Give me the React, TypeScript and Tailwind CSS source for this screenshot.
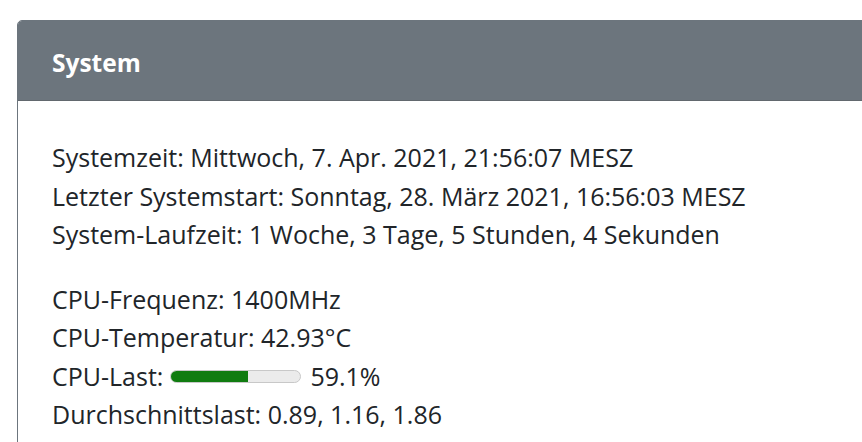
export default function App() {
  const font = { fontFamily: '"Open Sans", "Noto Sans", sans-serif' };
  return (
    <div
      className="h-[442px] w-[862px] overflow-hidden bg-white pl-[17px] pt-[20px]"
      style={font}
    >
      <div className="w-[880px] overflow-hidden rounded-[5px] border border-[#6c757d]">
        <div className="flex h-[80px] items-center border-b border-[#62686e] bg-[#6c757d] px-[34px] pt-[5px]">
          <h2 className="text-[24.5px] font-bold text-white">System</h2>
        </div>

        <div className="px-[34px] pt-[37px] pb-8 text-[25px] leading-[38.5px] text-[#212529]">
          <div>
            <p>Systemzeit: Mittwoch, 7. Apr. 2021, 21:56:07 MESZ</p>
            <p>Letzter Systemstart: Sonntag, 28. März 2021, 16:56:03 MESZ</p>
            <p>System-Laufzeit: 1 Woche, 3 Tage, 5 Stunden, 4 Sekunden</p>
          </div>

          <div className="mt-[26px]">
            <p>CPU-Frequenz: 1400MHz</p>
            <p>CPU-Temperatur: 42.93°C</p>
            <p className="flex items-center">
              CPU-Last:
              <span className="ml-[7px] mr-[9px] mt-[2px] inline-block h-[13px] w-[131px] overflow-hidden rounded-full border border-[#c8c8c8] bg-[#ebebeb]">
                <span className="block h-full w-[59.1%] bg-[#107c10]" />
              </span>
              59.1%
            </p>
            <p>Durchschnittslast: 0.89, 1.16, 1.86</p>
          </div>
        </div>
      </div>
    </div>
  );
}
